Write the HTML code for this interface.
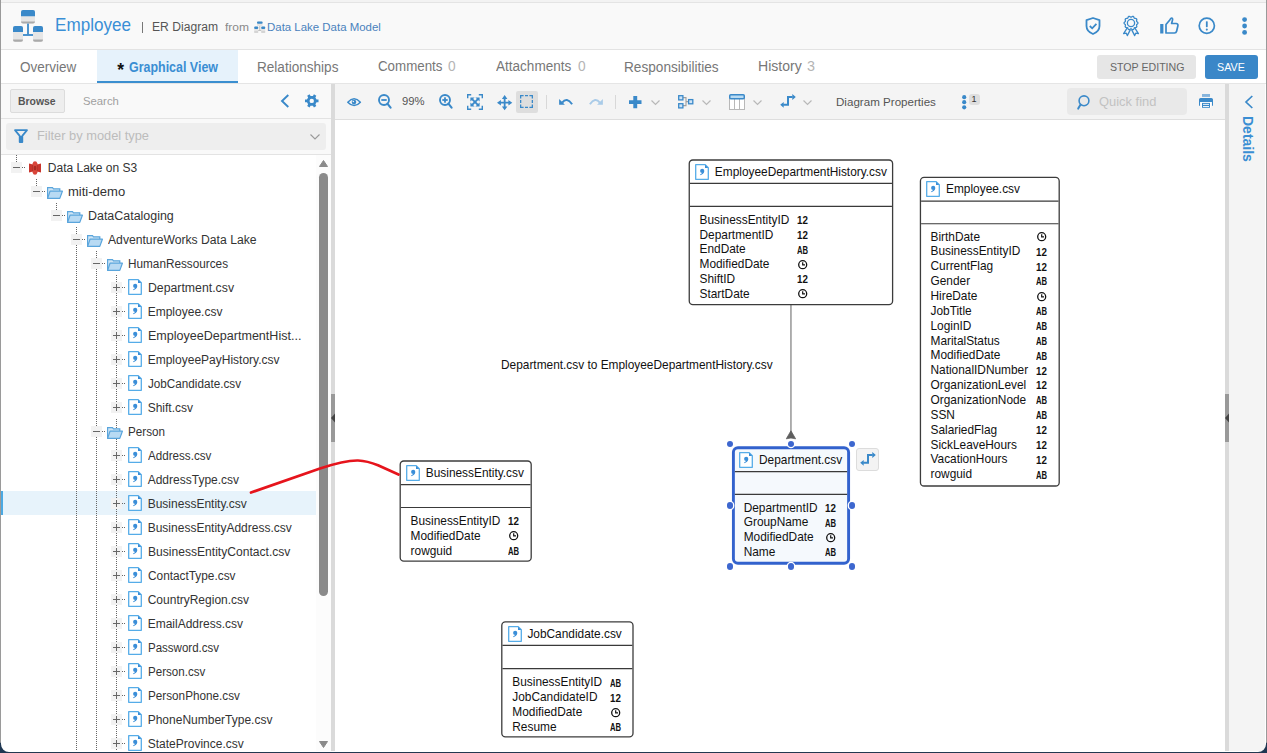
<!DOCTYPE html><html><head><meta charset="utf-8"><style>
html,body{margin:0;padding:0;}
body{width:1267px;height:753px;position:relative;overflow:hidden;background:#fff;font-family:"Liberation Sans", sans-serif;}
.t{position:absolute;white-space:nowrap;font-family:"Liberation Sans", sans-serif;}
svg{overflow:visible}
</style></head><body>
<div style="position:absolute;left:0px;top:0px;width:1267px;height:2px;background:#f3f3f3"></div>
<div style="position:absolute;left:0px;top:2px;width:1267px;height:1px;background:#e4e4e4"></div>
<div style="position:absolute;left:0px;top:3px;width:1267px;height:46px;background:#f9f9f9"></div>
<div style="position:absolute;left:0px;top:49px;width:1267px;height:1px;background:#e3e3e3"></div>
<svg style="position:absolute;left:13px;top:10px" width="30" height="32" viewBox="0 0 30 32"><rect x="8" y="0" width="14" height="13.6" rx="2" fill="#e6e6e6"/><path d="M8 11.5 h14 v0.1 a2 2 0 0 1 -2 2 h-10 a2 2 0 0 1 -2 -2z" fill="#aaa"/><path d="M8 6.2 V2 a2 2 0 0 1 2 -2 h10 a2 2 0 0 1 2 2 V6.2z" fill="#3a89c9"/><rect x="0" y="16" width="10" height="15.7" rx="2" fill="#e6e6e6"/><path d="M0 29.5 h10 a2 2 0 0 1 -2 2.2 h-6 a2 2 0 0 1 -2 -2.2z" fill="#aaa"/><path d="M0 22.1 V18 a2 2 0 0 1 2 -2 h6 a2 2 0 0 1 2 2 V22.1z" fill="#3a89c9"/><rect x="20" y="16" width="10" height="15.7" rx="2" fill="#e6e6e6"/><path d="M20 29.5 h10 a2 2 0 0 1 -2 2.2 h-6 a2 2 0 0 1 -2 -2.2z" fill="#aaa"/><path d="M20 22.1 V18 a2 2 0 0 1 2 -2 h6 a2 2 0 0 1 2 2 V22.1z" fill="#3a89c9"/><rect x="14.1" y="13.6" width="1.8" height="11" fill="#3a89c9"/><rect x="10" y="24.1" width="10" height="1.8" fill="#3a89c9"/></svg>
<div id="employee" style="position:absolute;white-space:nowrap;font-family:'Liberation Sans';left:54.69px;top:15.72px;font-size:18.605px;line-height:18.605px;color:#3a8fd6;font-weight:400;transform-origin:0 0;transform:scaleX(0.9194)">Employee</div>
<div style="position:absolute;left:142px;top:22px;width:1px;height:11px;background:#777"></div>
<div id="erdiag" style="position:absolute;white-space:nowrap;font-family:'Liberation Sans';left:152.24px;top:19.57px;font-size:13.227px;line-height:13.227px;color:#555;font-weight:400;transform-origin:0 0;transform:scaleX(0.9168)">ER Diagram</div>
<div id="from" style="position:absolute;white-space:nowrap;font-family:'Liberation Sans';left:225.04px;top:21.97px;font-size:11.500px;line-height:11.500px;color:#8a8a8a;font-weight:400;transform-origin:0 0;transform:scaleX(1.0442)">from</div>
<svg style="position:absolute;left:254px;top:20.5px" width="12" height="12" viewBox="0 0 12 12"><rect x="3" y="0.4" width="5.6" height="4.6" rx="1" fill="#e4e4e4"/><rect x="3" y="0.4" width="5.6" height="2.3" rx="1" fill="#3a89c9"/><rect x="0.2" y="5.5" width="4" height="6" rx="1" fill="#e4e4e4"/><rect x="0.2" y="5.5" width="4" height="2.6" rx="1" fill="#3a89c9"/><rect x="7.2" y="5.5" width="4" height="6" rx="1" fill="#e4e4e4"/><rect x="7.2" y="5.5" width="4" height="2.6" rx="1" fill="#3a89c9"/><rect x="5.3" y="5" width="1" height="4" fill="#bbb"/><rect x="4.2" y="9" width="3" height="0.9" fill="#bbb"/><rect x="0.2" y="10.6" width="4" height="0.9" fill="#bbb"/><rect x="7.2" y="10.6" width="4" height="0.9" fill="#bbb"/></svg>
<div id="dldm" style="position:absolute;white-space:nowrap;font-family:'Liberation Sans';left:266.82px;top:21.77px;font-size:10.901px;line-height:10.901px;color:#4a82bd;font-weight:400;transform-origin:0 0;transform:scaleX(1.0506)">Data Lake Data Model</div>
<svg style="position:absolute;left:1085px;top:17px" width="16" height="18" viewBox="0 0 16 18"><path d="M8 1 L14.5 3.2 V9 C14.5 13 11.5 15.6 8 17 C4.5 15.6 1.5 13 1.5 9 V3.2 Z" fill="none" stroke="#3a89c9" stroke-width="1.8" stroke-linejoin="round"/><path d="M4.8 9 L7.2 11.3 L11.4 6.8" fill="none" stroke="#3a89c9" stroke-width="1.8"/></svg>
<svg style="position:absolute;left:1122px;top:15px" width="18" height="21" viewBox="0 0 18 21"><path d="M5.4 12.6 L1.6 18.6 L4.3 18.2 L5.3 20.6 L8.4 14.6" fill="none" stroke="#3a89c9" stroke-width="1.3" stroke-linejoin="round"/><path d="M12.6 12.6 L16.4 18.6 L13.7 18.2 L12.7 20.6 L9.6 14.6" fill="none" stroke="#3a89c9" stroke-width="1.3" stroke-linejoin="round"/><path d="M15.95 8.00 L15.87 8.36 L15.64 8.70 L15.32 9.00 L14.99 9.27 L14.72 9.53 L14.56 9.81 L14.53 10.12 L14.60 10.49 L14.70 10.91 L14.78 11.34 L14.77 11.75 L14.62 12.09 L14.34 12.33 L13.96 12.47 L13.53 12.53 L13.10 12.55 L12.73 12.60 L12.44 12.73 L12.23 12.97 L12.06 13.30 L11.91 13.70 L11.71 14.10 L11.46 14.42 L11.15 14.61 L10.78 14.64 L10.39 14.53 L10.00 14.32 L9.64 14.09 L9.31 13.92 L9.00 13.85 L8.69 13.92 L8.36 14.09 L8.00 14.32 L7.61 14.53 L7.22 14.64 L6.85 14.61 L6.54 14.42 L6.29 14.10 L6.09 13.70 L5.94 13.30 L5.77 12.97 L5.56 12.73 L5.27 12.60 L4.90 12.55 L4.47 12.53 L4.04 12.47 L3.66 12.33 L3.38 12.09 L3.23 11.75 L3.22 11.34 L3.30 10.91 L3.40 10.49 L3.47 10.12 L3.44 9.81 L3.28 9.53 L3.01 9.27 L2.68 9.00 L2.36 8.70 L2.13 8.36 L2.05 8.00 L2.13 7.64 L2.36 7.30 L2.68 7.00 L3.01 6.73 L3.28 6.47 L3.44 6.19 L3.47 5.88 L3.40 5.51 L3.30 5.09 L3.22 4.66 L3.23 4.25 L3.38 3.91 L3.66 3.67 L4.04 3.53 L4.47 3.47 L4.90 3.45 L5.27 3.40 L5.56 3.27 L5.77 3.03 L5.94 2.70 L6.09 2.30 L6.29 1.90 L6.54 1.58 L6.85 1.39 L7.22 1.36 L7.61 1.47 L8.00 1.68 L8.36 1.91 L8.69 2.08 L9.00 2.15 L9.31 2.08 L9.64 1.91 L10.00 1.68 L10.39 1.47 L10.78 1.36 L11.15 1.39 L11.46 1.58 L11.71 1.90 L11.91 2.30 L12.06 2.70 L12.23 3.03 L12.44 3.27 L12.73 3.40 L13.10 3.45 L13.53 3.47 L13.96 3.53 L14.34 3.67 L14.62 3.91 L14.77 4.25 L14.78 4.66 L14.70 5.09 L14.60 5.51 L14.53 5.88 L14.56 6.19 L14.72 6.47 L14.99 6.73 L15.32 7.00 L15.64 7.30 L15.87 7.64 L15.95 8.00Z" fill="#f9f9f9" stroke="#3a89c9" stroke-width="1.3" stroke-linejoin="round"/><circle cx="9" cy="8" r="3.6" fill="none" stroke="#3a89c9" stroke-width="1.3"/></svg>
<svg style="position:absolute;left:1160px;top:17px" width="19" height="17" viewBox="0 0 19 17"><rect x="0.2" y="7" width="3.2" height="9.5" fill="#3a89c9"/><path d="M6 7.5 L9.8 3 C10.5 1.8 10.8 1 11.5 1 C12.6 1 12.8 2.2 12.4 3.5 L11.6 6.5 H16.2 C17.5 6.5 18.2 7.6 17.9 8.8 L16.6 14.3 C16.3 15.5 15.5 16 14.5 16 H6 Z" fill="none" stroke="#3a89c9" stroke-width="1.7" stroke-linejoin="round"/></svg>
<svg style="position:absolute;left:1198px;top:17px" width="18" height="18" viewBox="0 0 18 18"><circle cx="8.8" cy="8.8" r="7.6" fill="none" stroke="#3a89c9" stroke-width="1.7"/><rect x="7.9" y="4.2" width="1.8" height="6" rx="0.6" fill="#3a89c9"/><circle cx="8.8" cy="12.6" r="1.05" fill="#3a89c9"/></svg>
<svg style="position:absolute;left:1242px;top:17px" width="6" height="18" viewBox="0 0 6 18"><circle cx="2.6" cy="2.6" r="2.4" fill="#3a89c9"/><circle cx="2.6" cy="9" r="2.4" fill="#3a89c9"/><circle cx="2.6" cy="15.4" r="2.4" fill="#3a89c9"/></svg>
<div style="position:absolute;left:0px;top:50px;width:1267px;height:33px;background:#fff"></div>
<div style="position:absolute;left:97px;top:50px;width:141px;height:31px;background:#e6f2fb"></div>
<div style="position:absolute;left:97px;top:81px;width:141px;height:2px;background:#3b8fd0"></div>
<div style="position:absolute;left:0px;top:83px;width:1267px;height:1px;background:#e5e5e5"></div>
<div id="overview" style="position:absolute;white-space:nowrap;font-family:'Liberation Sans';left:20.15px;top:59.82px;font-size:14.390px;line-height:14.390px;color:#777;font-weight:400;transform-origin:0 0;transform:scaleX(0.9393)">Overview</div>
<div class="t" style="left:117.3px;top:61.69px;font-size:17.5px;line-height:17.5px;color:#111;font-weight:700;">*</div>
<div id="gview" style="position:absolute;white-space:nowrap;font-family:'Liberation Sans';left:129.27px;top:60.97px;font-size:13.953px;line-height:13.953px;color:#3a8ed3;font-weight:700;transform-origin:0 0;transform:scaleX(0.8930)">Graphical View</div>
<div id="rel" style="position:absolute;white-space:nowrap;font-family:'Liberation Sans';left:256.59px;top:59.82px;font-size:14.390px;line-height:14.390px;color:#777;font-weight:400;transform-origin:0 0;transform:scaleX(0.9438)">Relationships</div>
<div id="comments" style="position:absolute;white-space:nowrap;font-family:'Liberation Sans';left:378.48px;top:59.40px;font-size:14.244px;line-height:14.244px;color:#777;font-weight:400;transform-origin:0 0;transform:scaleX(0.9362)">Comments</div>
<div id="c0" style="position:absolute;white-space:nowrap;font-family:'Liberation Sans';left:447.68px;top:59.40px;font-size:14.244px;line-height:14.244px;color:#b5b5b5;font-weight:400;transform-origin:0 0;transform:scaleX(0.9632)">0</div>
<div id="attach" style="position:absolute;white-space:nowrap;font-family:'Liberation Sans';left:496.26px;top:59.40px;font-size:14.244px;line-height:14.244px;color:#777;font-weight:400;transform-origin:0 0;transform:scaleX(0.9511)">Attachments</div>
<div id="a0" style="position:absolute;white-space:nowrap;font-family:'Liberation Sans';left:577.68px;top:59.40px;font-size:14.244px;line-height:14.244px;color:#b5b5b5;font-weight:400;transform-origin:0 0;transform:scaleX(0.9632)">0</div>
<div id="resp" style="position:absolute;white-space:nowrap;font-family:'Liberation Sans';left:623.58px;top:59.82px;font-size:14.390px;line-height:14.390px;color:#777;font-weight:400;transform-origin:0 0;transform:scaleX(0.9478)">Responsibilities</div>
<div id="history" style="position:absolute;white-space:nowrap;font-family:'Liberation Sans';left:757.93px;top:59.40px;font-size:14.244px;line-height:14.244px;color:#777;font-weight:400;transform-origin:0 0;transform:scaleX(0.9865)">History</div>
<div id="h3" style="position:absolute;white-space:nowrap;font-family:'Liberation Sans';left:807.13px;top:59.40px;font-size:14.244px;line-height:14.244px;color:#b5b5b5;font-weight:400;transform-origin:0 0;transform:scaleX(1.0075)">3</div>
<div style="position:absolute;left:1097px;top:55px;width:99px;height:24px;background:#e6e6e6;border-radius:3px"></div>
<div id="stop" style="position:absolute;white-space:nowrap;font-family:'Liberation Sans';left:1110.05px;top:61.16px;font-size:11.628px;line-height:11.628px;color:#666;font-weight:400;transform-origin:0 0;transform:scaleX(0.9139)">STOP EDITING</div>
<div style="position:absolute;left:1205px;top:55px;width:53px;height:24px;background:#3a87c8;border-radius:3px"></div>
<div id="save" style="position:absolute;white-space:nowrap;font-family:'Liberation Sans';left:1216.83px;top:61.16px;font-size:11.628px;line-height:11.628px;color:#fff;font-weight:400;transform-origin:0 0;transform:scaleX(0.9238)">SAVE</div>
<div style="position:absolute;left:1px;top:84px;width:330px;height:34px;background:#f9f9f9"></div>
<div style="position:absolute;left:1px;top:118px;width:330px;height:1px;background:#e3e3e3"></div>
<div style="position:absolute;left:1px;top:119px;width:330px;height:35px;background:#f9f9f9"></div>
<div style="position:absolute;left:1px;top:154px;width:330px;height:1px;background:#e3e3e3"></div>
<div style="position:absolute;left:10px;top:89px;width:54px;height:23px;background:#eeeeee;border:1px solid #dcdcdc;border-radius:2px;box-sizing:border-box;width:55px;height:24px"></div>
<div id="browse" style="position:absolute;white-space:nowrap;font-family:'Liberation Sans';left:18.49px;top:95.51px;font-size:11.119px;line-height:11.119px;color:#555;font-weight:700;transform-origin:0 0;transform:scaleX(0.9376)">Browse</div>
<div id="search" style="position:absolute;white-space:nowrap;font-family:'Liberation Sans';left:82.81px;top:95.51px;font-size:11.119px;line-height:11.119px;color:#a0a0a0;font-weight:400;transform-origin:0 0;transform:scaleX(1.0176)">Search</div>
<svg style="position:absolute;left:280px;top:94px" width="10" height="14" viewBox="0 0 10 14"><path d="M8.3 1 L2 7 L8.3 13" fill="none" stroke="#3a89c9" stroke-width="1.9"/></svg>
<svg style="position:absolute;left:305px;top:94px" width="14" height="14" viewBox="0 0 14 14"><path d="M11.54 5.48 L13.51 5.54 L13.51 8.26 L11.54 8.32 L10.38 10.34 L11.31 12.08 L8.95 13.44 L7.92 11.76 L5.58 11.76 L4.55 13.44 L2.19 12.08 L3.12 10.34 L1.96 8.32 L-0.01 8.26 L-0.01 5.54 L1.96 5.48 L3.12 3.46 L2.19 1.72 L4.55 0.36 L5.58 2.04 L7.92 2.04 L8.95 0.36 L11.31 1.72 L10.38 3.46Z M8.95 6.9 A2.2 2.2 0 1 0 4.55 6.9 A2.2 2.2 0 1 0 8.95 6.9Z" fill="#3a89c9" fill-rule="evenodd"/></svg>
<div style="position:absolute;left:6px;top:123px;width:320px;height:27px;background:#eeeeee;border-radius:3px"></div>
<svg style="position:absolute;left:14px;top:129px" width="14" height="14" viewBox="0 0 14 14"><path d="M1 1.2 H13 L8.3 6.8 V13 H5.7 V6.8 Z" fill="none" stroke="#3a89c9" stroke-width="1.8" stroke-linejoin="round"/><rect x="5.7" y="7" width="2.6" height="6" fill="#3a89c9"/></svg>
<div id="filter" style="position:absolute;white-space:nowrap;font-family:'Liberation Sans';left:37.33px;top:130.44px;font-size:12.936px;line-height:12.936px;color:#bcbcbc;font-weight:400;transform-origin:0 0;transform:scaleX(0.9932)">Filter by model type</div>
<svg style="position:absolute;left:310px;top:134px" width="10" height="6" viewBox="0 0 10 6"><path d="M0.5 0.5 L5 5 L9.5 0.5" fill="none" stroke="#999" stroke-width="1.1"/></svg>
<div style="position:absolute;left:1px;top:155px;width:315px;height:597px;background:#fff"></div>
<div style="position:absolute;left:1px;top:491px;width:315px;height:24px;background:#e7f3fb"></div>
<div style="position:absolute;left:1px;top:491px;width:2px;height:24px;background:#4ba9e3"></div>
<div style="position:absolute;left:16px;top:155px;width:1px;height:7px;background:repeating-linear-gradient(to bottom,#666 0 1px,transparent 1px 2px)"></div>
<div style="position:absolute;left:36px;top:179px;width:1px;height:7px;background:repeating-linear-gradient(to bottom,#666 0 1px,transparent 1px 2px)"></div>
<div style="position:absolute;left:56px;top:203px;width:1px;height:7px;background:repeating-linear-gradient(to bottom,#666 0 1px,transparent 1px 2px)"></div>
<div style="position:absolute;left:76px;top:227px;width:1px;height:525px;background:repeating-linear-gradient(to bottom,#666 0 1px,transparent 1px 2px)"></div>
<div style="position:absolute;left:96px;top:251px;width:1px;height:501px;background:repeating-linear-gradient(to bottom,#666 0 1px,transparent 1px 2px)"></div>
<div style="position:absolute;left:116px;top:275px;width:1px;height:128px;background:repeating-linear-gradient(to bottom,#666 0 1px,transparent 1px 2px)"></div>
<div style="position:absolute;left:116px;top:419px;width:1px;height:333px;background:repeating-linear-gradient(to bottom,#666 0 1px,transparent 1px 2px)"></div>
<div style="position:absolute;left:11px;top:162.0px;width:11px;height:11px;background:#f2f2f2"></div>
<div style="position:absolute;left:13px;top:166.9px;width:7px;height:1.2px;background:#666"></div>
<div style="position:absolute;left:22px;top:167px;width:4px;height:1px;background:repeating-linear-gradient(to right,#666 0 1px,transparent 1px 2px)"></div>
<svg style="position:absolute;left:29px;top:160.5px" width="12" height="14" viewBox="0 0 12 14"><path d="M0 2.4 L4 3.6 V10.4 L0 11.6Z" fill="#c9352c"/><path d="M12 2.4 L8 3.6 V10.4 L12 11.6Z" fill="#c9352c"/><rect x="3.6" y="2" width="4.8" height="10" fill="#e04a3e"/><ellipse cx="6" cy="1.9" rx="2.1" ry="1.7" fill="#d8443a"/><ellipse cx="6" cy="12.1" rx="2.1" ry="1.7" fill="#d8443a"/><ellipse cx="6" cy="7" rx="1.3" ry="2.6" fill="#a82a22"/><path d="M3.8 3.6 V10.4 M8.2 3.6 V10.4" stroke="#9b2a22" stroke-width="0.7"/></svg>
<div class="t" style="left:47.8px;top:161.84px;font-size:12px;line-height:12px;color:#333;font-weight:400;">Data Lake on S3</div>
<div style="position:absolute;left:31px;top:186.0px;width:11px;height:11px;background:#f2f2f2"></div>
<div style="position:absolute;left:33px;top:190.9px;width:7px;height:1.2px;background:#666"></div>
<div style="position:absolute;left:42px;top:191px;width:4px;height:1px;background:repeating-linear-gradient(to right,#666 0 1px,transparent 1px 2px)"></div>
<svg style="position:absolute;left:47px;top:187.0px" width="16" height="12" viewBox="0 0 16 12"><path d="M0.6 11.4 V0.6 H5.5 L6.5 1.8 H12.8 V4.2" fill="#cfe5f5" stroke="#5aa5dc" stroke-width="1.2"/><path d="M0.6 11.4 L3 4.2 H15.4 L12.8 11.4 Z" fill="#b8daf3" stroke="#5aa5dc" stroke-width="1.2" stroke-linejoin="round"/></svg>
<div class="t" style="left:67.5px;top:185.84px;font-size:12px;line-height:12px;color:#333;font-weight:400;transform-origin:0 0;transform:scaleX(1.0857)">miti-demo</div>
<div style="position:absolute;left:51px;top:210.0px;width:11px;height:11px;background:#f2f2f2"></div>
<div style="position:absolute;left:53px;top:214.9px;width:7px;height:1.2px;background:#666"></div>
<div style="position:absolute;left:62px;top:215px;width:4px;height:1px;background:repeating-linear-gradient(to right,#666 0 1px,transparent 1px 2px)"></div>
<svg style="position:absolute;left:67px;top:211.0px" width="16" height="12" viewBox="0 0 16 12"><path d="M0.6 11.4 V0.6 H5.5 L6.5 1.8 H12.8 V4.2" fill="#cfe5f5" stroke="#5aa5dc" stroke-width="1.2"/><path d="M0.6 11.4 L3 4.2 H15.4 L12.8 11.4 Z" fill="#b8daf3" stroke="#5aa5dc" stroke-width="1.2" stroke-linejoin="round"/></svg>
<div class="t" style="left:87.5px;top:209.84px;font-size:12px;line-height:12px;color:#333;font-weight:400;transform-origin:0 0;transform:scaleX(1.0368)">DataCataloging</div>
<div style="position:absolute;left:71px;top:234.0px;width:11px;height:11px;background:#f2f2f2"></div>
<div style="position:absolute;left:73px;top:238.9px;width:7px;height:1.2px;background:#666"></div>
<div style="position:absolute;left:82px;top:239px;width:4px;height:1px;background:repeating-linear-gradient(to right,#666 0 1px,transparent 1px 2px)"></div>
<svg style="position:absolute;left:87px;top:235.0px" width="16" height="12" viewBox="0 0 16 12"><path d="M0.6 11.4 V0.6 H5.5 L6.5 1.8 H12.8 V4.2" fill="#cfe5f5" stroke="#5aa5dc" stroke-width="1.2"/><path d="M0.6 11.4 L3 4.2 H15.4 L12.8 11.4 Z" fill="#b8daf3" stroke="#5aa5dc" stroke-width="1.2" stroke-linejoin="round"/></svg>
<div class="t" style="left:107.5px;top:233.84px;font-size:12px;line-height:12px;color:#333;font-weight:400;transform-origin:0 0;transform:scaleX(1.0137)">AdventureWorks Data Lake</div>
<div style="position:absolute;left:91px;top:258.0px;width:11px;height:11px;background:#f2f2f2"></div>
<div style="position:absolute;left:93px;top:262.9px;width:7px;height:1.2px;background:#666"></div>
<div style="position:absolute;left:102px;top:263px;width:4px;height:1px;background:repeating-linear-gradient(to right,#666 0 1px,transparent 1px 2px)"></div>
<svg style="position:absolute;left:107px;top:259.0px" width="16" height="12" viewBox="0 0 16 12"><path d="M0.6 11.4 V0.6 H5.5 L6.5 1.8 H12.8 V4.2" fill="#cfe5f5" stroke="#5aa5dc" stroke-width="1.2"/><path d="M0.6 11.4 L3 4.2 H15.4 L12.8 11.4 Z" fill="#b8daf3" stroke="#5aa5dc" stroke-width="1.2" stroke-linejoin="round"/></svg>
<div class="t" style="left:127.5px;top:257.84px;font-size:12px;line-height:12px;color:#333;font-weight:400;transform-origin:0 0;transform:scaleX(0.9803)">HumanRessources</div>
<div style="position:absolute;left:111px;top:282.0px;width:11px;height:11px;background:#f2f2f2"></div>
<div style="position:absolute;left:113px;top:286.9px;width:7px;height:1.2px;background:#666"></div>
<div style="position:absolute;left:115.9px;top:284.0px;width:1.2px;height:7px;background:#666"></div>
<div style="position:absolute;left:122px;top:287px;width:4px;height:1px;background:repeating-linear-gradient(to right,#666 0 1px,transparent 1px 2px)"></div>
<svg style="position:absolute;left:128px;top:279.0px" width="14" height="16" viewBox="0 0 14 16"><path d="M0.7 0.7 H10.2 L13.3 3.8 V15.3 H0.7 Z" fill="#fff" stroke="#55ace8" stroke-width="1.3" stroke-linejoin="round"/><path d="M10 0.8 L13.2 4 H10 Z" fill="#3a8ed8"/><circle cx="7.2" cy="6.9" r="2.1" fill="#3a8ed8"/><path d="M9.2 7.3 C9.1 9.2 7.6 10.6 5.3 11.2 L5.1 10.5 C6.3 10 7.1 9.3 7.3 8.6 Z" fill="#3a8ed8"/></svg>
<div class="t" style="left:147.7px;top:281.84px;font-size:12px;line-height:12px;color:#333;font-weight:400;transform-origin:0 0;transform:scaleX(1.0237)">Department.csv</div>
<div style="position:absolute;left:111px;top:306.0px;width:11px;height:11px;background:#f2f2f2"></div>
<div style="position:absolute;left:113px;top:310.9px;width:7px;height:1.2px;background:#666"></div>
<div style="position:absolute;left:115.9px;top:308.0px;width:1.2px;height:7px;background:#666"></div>
<div style="position:absolute;left:122px;top:311px;width:4px;height:1px;background:repeating-linear-gradient(to right,#666 0 1px,transparent 1px 2px)"></div>
<svg style="position:absolute;left:128px;top:303.0px" width="14" height="16" viewBox="0 0 14 16"><path d="M0.7 0.7 H10.2 L13.3 3.8 V15.3 H0.7 Z" fill="#fff" stroke="#55ace8" stroke-width="1.3" stroke-linejoin="round"/><path d="M10 0.8 L13.2 4 H10 Z" fill="#3a8ed8"/><circle cx="7.2" cy="6.9" r="2.1" fill="#3a8ed8"/><path d="M9.2 7.3 C9.1 9.2 7.6 10.6 5.3 11.2 L5.1 10.5 C6.3 10 7.1 9.3 7.3 8.6 Z" fill="#3a8ed8"/></svg>
<div class="t" style="left:147.7px;top:305.84px;font-size:12px;line-height:12px;color:#333;font-weight:400;">Employee.csv</div>
<div style="position:absolute;left:111px;top:330.0px;width:11px;height:11px;background:#f2f2f2"></div>
<div style="position:absolute;left:113px;top:334.9px;width:7px;height:1.2px;background:#666"></div>
<div style="position:absolute;left:115.9px;top:332.0px;width:1.2px;height:7px;background:#666"></div>
<div style="position:absolute;left:122px;top:335px;width:4px;height:1px;background:repeating-linear-gradient(to right,#666 0 1px,transparent 1px 2px)"></div>
<svg style="position:absolute;left:128px;top:327.0px" width="14" height="16" viewBox="0 0 14 16"><path d="M0.7 0.7 H10.2 L13.3 3.8 V15.3 H0.7 Z" fill="#fff" stroke="#55ace8" stroke-width="1.3" stroke-linejoin="round"/><path d="M10 0.8 L13.2 4 H10 Z" fill="#3a8ed8"/><circle cx="7.2" cy="6.9" r="2.1" fill="#3a8ed8"/><path d="M9.2 7.3 C9.1 9.2 7.6 10.6 5.3 11.2 L5.1 10.5 C6.3 10 7.1 9.3 7.3 8.6 Z" fill="#3a8ed8"/></svg>
<div class="t" style="left:147.7px;top:329.84px;font-size:12px;line-height:12px;color:#333;font-weight:400;transform-origin:0 0;transform:scaleX(1.0454)">EmployeeDepartmentHist...</div>
<div style="position:absolute;left:111px;top:354.0px;width:11px;height:11px;background:#f2f2f2"></div>
<div style="position:absolute;left:113px;top:358.9px;width:7px;height:1.2px;background:#666"></div>
<div style="position:absolute;left:115.9px;top:356.0px;width:1.2px;height:7px;background:#666"></div>
<div style="position:absolute;left:122px;top:359px;width:4px;height:1px;background:repeating-linear-gradient(to right,#666 0 1px,transparent 1px 2px)"></div>
<svg style="position:absolute;left:128px;top:351.0px" width="14" height="16" viewBox="0 0 14 16"><path d="M0.7 0.7 H10.2 L13.3 3.8 V15.3 H0.7 Z" fill="#fff" stroke="#55ace8" stroke-width="1.3" stroke-linejoin="round"/><path d="M10 0.8 L13.2 4 H10 Z" fill="#3a8ed8"/><circle cx="7.2" cy="6.9" r="2.1" fill="#3a8ed8"/><path d="M9.2 7.3 C9.1 9.2 7.6 10.6 5.3 11.2 L5.1 10.5 C6.3 10 7.1 9.3 7.3 8.6 Z" fill="#3a8ed8"/></svg>
<div class="t" style="left:147.7px;top:353.84px;font-size:12px;line-height:12px;color:#333;font-weight:400;">EmployeePayHistory.csv</div>
<div style="position:absolute;left:111px;top:378.0px;width:11px;height:11px;background:#f2f2f2"></div>
<div style="position:absolute;left:113px;top:382.9px;width:7px;height:1.2px;background:#666"></div>
<div style="position:absolute;left:115.9px;top:380.0px;width:1.2px;height:7px;background:#666"></div>
<div style="position:absolute;left:122px;top:383px;width:4px;height:1px;background:repeating-linear-gradient(to right,#666 0 1px,transparent 1px 2px)"></div>
<svg style="position:absolute;left:128px;top:375.0px" width="14" height="16" viewBox="0 0 14 16"><path d="M0.7 0.7 H10.2 L13.3 3.8 V15.3 H0.7 Z" fill="#fff" stroke="#55ace8" stroke-width="1.3" stroke-linejoin="round"/><path d="M10 0.8 L13.2 4 H10 Z" fill="#3a8ed8"/><circle cx="7.2" cy="6.9" r="2.1" fill="#3a8ed8"/><path d="M9.2 7.3 C9.1 9.2 7.6 10.6 5.3 11.2 L5.1 10.5 C6.3 10 7.1 9.3 7.3 8.6 Z" fill="#3a8ed8"/></svg>
<div class="t" style="left:147.7px;top:377.84px;font-size:12px;line-height:12px;color:#333;font-weight:400;transform-origin:0 0;transform:scaleX(0.9748)">JobCandidate.csv</div>
<div style="position:absolute;left:111px;top:402.0px;width:11px;height:11px;background:#f2f2f2"></div>
<div style="position:absolute;left:113px;top:406.9px;width:7px;height:1.2px;background:#666"></div>
<div style="position:absolute;left:115.9px;top:404.0px;width:1.2px;height:7px;background:#666"></div>
<div style="position:absolute;left:122px;top:407px;width:4px;height:1px;background:repeating-linear-gradient(to right,#666 0 1px,transparent 1px 2px)"></div>
<svg style="position:absolute;left:128px;top:399.0px" width="14" height="16" viewBox="0 0 14 16"><path d="M0.7 0.7 H10.2 L13.3 3.8 V15.3 H0.7 Z" fill="#fff" stroke="#55ace8" stroke-width="1.3" stroke-linejoin="round"/><path d="M10 0.8 L13.2 4 H10 Z" fill="#3a8ed8"/><circle cx="7.2" cy="6.9" r="2.1" fill="#3a8ed8"/><path d="M9.2 7.3 C9.1 9.2 7.6 10.6 5.3 11.2 L5.1 10.5 C6.3 10 7.1 9.3 7.3 8.6 Z" fill="#3a8ed8"/></svg>
<div class="t" style="left:147.7px;top:401.84px;font-size:12px;line-height:12px;color:#333;font-weight:400;">Shift.csv</div>
<div style="position:absolute;left:91px;top:426.0px;width:11px;height:11px;background:#f2f2f2"></div>
<div style="position:absolute;left:93px;top:430.9px;width:7px;height:1.2px;background:#666"></div>
<div style="position:absolute;left:102px;top:431px;width:4px;height:1px;background:repeating-linear-gradient(to right,#666 0 1px,transparent 1px 2px)"></div>
<svg style="position:absolute;left:107px;top:427.0px" width="16" height="12" viewBox="0 0 16 12"><path d="M0.6 11.4 V0.6 H5.5 L6.5 1.8 H12.8 V4.2" fill="#cfe5f5" stroke="#5aa5dc" stroke-width="1.2"/><path d="M0.6 11.4 L3 4.2 H15.4 L12.8 11.4 Z" fill="#b8daf3" stroke="#5aa5dc" stroke-width="1.2" stroke-linejoin="round"/></svg>
<div class="t" style="left:127.5px;top:425.84px;font-size:12px;line-height:12px;color:#333;font-weight:400;transform-origin:0 0;transform:scaleX(0.9733)">Person</div>
<div style="position:absolute;left:111px;top:450.0px;width:11px;height:11px;background:#f2f2f2"></div>
<div style="position:absolute;left:113px;top:454.9px;width:7px;height:1.2px;background:#666"></div>
<div style="position:absolute;left:115.9px;top:452.0px;width:1.2px;height:7px;background:#666"></div>
<div style="position:absolute;left:122px;top:455px;width:4px;height:1px;background:repeating-linear-gradient(to right,#666 0 1px,transparent 1px 2px)"></div>
<svg style="position:absolute;left:128px;top:447.0px" width="14" height="16" viewBox="0 0 14 16"><path d="M0.7 0.7 H10.2 L13.3 3.8 V15.3 H0.7 Z" fill="#fff" stroke="#55ace8" stroke-width="1.3" stroke-linejoin="round"/><path d="M10 0.8 L13.2 4 H10 Z" fill="#3a8ed8"/><circle cx="7.2" cy="6.9" r="2.1" fill="#3a8ed8"/><path d="M9.2 7.3 C9.1 9.2 7.6 10.6 5.3 11.2 L5.1 10.5 C6.3 10 7.1 9.3 7.3 8.6 Z" fill="#3a8ed8"/></svg>
<div class="t" style="left:147.7px;top:449.84px;font-size:12px;line-height:12px;color:#333;font-weight:400;transform-origin:0 0;transform:scaleX(0.9694)">Address.csv</div>
<div style="position:absolute;left:111px;top:474.0px;width:11px;height:11px;background:#f2f2f2"></div>
<div style="position:absolute;left:113px;top:478.9px;width:7px;height:1.2px;background:#666"></div>
<div style="position:absolute;left:115.9px;top:476.0px;width:1.2px;height:7px;background:#666"></div>
<div style="position:absolute;left:122px;top:479px;width:4px;height:1px;background:repeating-linear-gradient(to right,#666 0 1px,transparent 1px 2px)"></div>
<svg style="position:absolute;left:128px;top:471.0px" width="14" height="16" viewBox="0 0 14 16"><path d="M0.7 0.7 H10.2 L13.3 3.8 V15.3 H0.7 Z" fill="#fff" stroke="#55ace8" stroke-width="1.3" stroke-linejoin="round"/><path d="M10 0.8 L13.2 4 H10 Z" fill="#3a8ed8"/><circle cx="7.2" cy="6.9" r="2.1" fill="#3a8ed8"/><path d="M9.2 7.3 C9.1 9.2 7.6 10.6 5.3 11.2 L5.1 10.5 C6.3 10 7.1 9.3 7.3 8.6 Z" fill="#3a8ed8"/></svg>
<div class="t" style="left:147.7px;top:473.84px;font-size:12px;line-height:12px;color:#333;font-weight:400;">AddressType.csv</div>
<div style="position:absolute;left:111px;top:498.0px;width:11px;height:11px;background:#f2f2f2"></div>
<div style="position:absolute;left:113px;top:502.9px;width:7px;height:1.2px;background:#666"></div>
<div style="position:absolute;left:115.9px;top:500.0px;width:1.2px;height:7px;background:#666"></div>
<div style="position:absolute;left:122px;top:503px;width:4px;height:1px;background:repeating-linear-gradient(to right,#666 0 1px,transparent 1px 2px)"></div>
<svg style="position:absolute;left:128px;top:495.0px" width="14" height="16" viewBox="0 0 14 16"><path d="M0.7 0.7 H10.2 L13.3 3.8 V15.3 H0.7 Z" fill="#fff" stroke="#55ace8" stroke-width="1.3" stroke-linejoin="round"/><path d="M10 0.8 L13.2 4 H10 Z" fill="#3a8ed8"/><circle cx="7.2" cy="6.9" r="2.1" fill="#3a8ed8"/><path d="M9.2 7.3 C9.1 9.2 7.6 10.6 5.3 11.2 L5.1 10.5 C6.3 10 7.1 9.3 7.3 8.6 Z" fill="#3a8ed8"/></svg>
<div class="t" style="left:147.7px;top:497.84px;font-size:12px;line-height:12px;color:#333;font-weight:400;">BusinessEntity.csv</div>
<div style="position:absolute;left:111px;top:522.0px;width:11px;height:11px;background:#f2f2f2"></div>
<div style="position:absolute;left:113px;top:526.9px;width:7px;height:1.2px;background:#666"></div>
<div style="position:absolute;left:115.9px;top:524.0px;width:1.2px;height:7px;background:#666"></div>
<div style="position:absolute;left:122px;top:527px;width:4px;height:1px;background:repeating-linear-gradient(to right,#666 0 1px,transparent 1px 2px)"></div>
<svg style="position:absolute;left:128px;top:519.0px" width="14" height="16" viewBox="0 0 14 16"><path d="M0.7 0.7 H10.2 L13.3 3.8 V15.3 H0.7 Z" fill="#fff" stroke="#55ace8" stroke-width="1.3" stroke-linejoin="round"/><path d="M10 0.8 L13.2 4 H10 Z" fill="#3a8ed8"/><circle cx="7.2" cy="6.9" r="2.1" fill="#3a8ed8"/><path d="M9.2 7.3 C9.1 9.2 7.6 10.6 5.3 11.2 L5.1 10.5 C6.3 10 7.1 9.3 7.3 8.6 Z" fill="#3a8ed8"/></svg>
<div class="t" style="left:147.7px;top:521.84px;font-size:12px;line-height:12px;color:#333;font-weight:400;">BusinessEntityAddress.csv</div>
<div style="position:absolute;left:111px;top:546.0px;width:11px;height:11px;background:#f2f2f2"></div>
<div style="position:absolute;left:113px;top:550.9px;width:7px;height:1.2px;background:#666"></div>
<div style="position:absolute;left:115.9px;top:548.0px;width:1.2px;height:7px;background:#666"></div>
<div style="position:absolute;left:122px;top:551px;width:4px;height:1px;background:repeating-linear-gradient(to right,#666 0 1px,transparent 1px 2px)"></div>
<svg style="position:absolute;left:128px;top:543.0px" width="14" height="16" viewBox="0 0 14 16"><path d="M0.7 0.7 H10.2 L13.3 3.8 V15.3 H0.7 Z" fill="#fff" stroke="#55ace8" stroke-width="1.3" stroke-linejoin="round"/><path d="M10 0.8 L13.2 4 H10 Z" fill="#3a8ed8"/><circle cx="7.2" cy="6.9" r="2.1" fill="#3a8ed8"/><path d="M9.2 7.3 C9.1 9.2 7.6 10.6 5.3 11.2 L5.1 10.5 C6.3 10 7.1 9.3 7.3 8.6 Z" fill="#3a8ed8"/></svg>
<div class="t" style="left:147.7px;top:545.84px;font-size:12px;line-height:12px;color:#333;font-weight:400;transform-origin:0 0;transform:scaleX(1.0071)">BusinessEntityContact.csv</div>
<div style="position:absolute;left:111px;top:570.0px;width:11px;height:11px;background:#f2f2f2"></div>
<div style="position:absolute;left:113px;top:574.9px;width:7px;height:1.2px;background:#666"></div>
<div style="position:absolute;left:115.9px;top:572.0px;width:1.2px;height:7px;background:#666"></div>
<div style="position:absolute;left:122px;top:575px;width:4px;height:1px;background:repeating-linear-gradient(to right,#666 0 1px,transparent 1px 2px)"></div>
<svg style="position:absolute;left:128px;top:567.0px" width="14" height="16" viewBox="0 0 14 16"><path d="M0.7 0.7 H10.2 L13.3 3.8 V15.3 H0.7 Z" fill="#fff" stroke="#55ace8" stroke-width="1.3" stroke-linejoin="round"/><path d="M10 0.8 L13.2 4 H10 Z" fill="#3a8ed8"/><circle cx="7.2" cy="6.9" r="2.1" fill="#3a8ed8"/><path d="M9.2 7.3 C9.1 9.2 7.6 10.6 5.3 11.2 L5.1 10.5 C6.3 10 7.1 9.3 7.3 8.6 Z" fill="#3a8ed8"/></svg>
<div class="t" style="left:147.7px;top:569.84px;font-size:12px;line-height:12px;color:#333;font-weight:400;transform-origin:0 0;transform:scaleX(0.9864)">ContactType.csv</div>
<div style="position:absolute;left:111px;top:594.0px;width:11px;height:11px;background:#f2f2f2"></div>
<div style="position:absolute;left:113px;top:598.9px;width:7px;height:1.2px;background:#666"></div>
<div style="position:absolute;left:115.9px;top:596.0px;width:1.2px;height:7px;background:#666"></div>
<div style="position:absolute;left:122px;top:599px;width:4px;height:1px;background:repeating-linear-gradient(to right,#666 0 1px,transparent 1px 2px)"></div>
<svg style="position:absolute;left:128px;top:591.0px" width="14" height="16" viewBox="0 0 14 16"><path d="M0.7 0.7 H10.2 L13.3 3.8 V15.3 H0.7 Z" fill="#fff" stroke="#55ace8" stroke-width="1.3" stroke-linejoin="round"/><path d="M10 0.8 L13.2 4 H10 Z" fill="#3a8ed8"/><circle cx="7.2" cy="6.9" r="2.1" fill="#3a8ed8"/><path d="M9.2 7.3 C9.1 9.2 7.6 10.6 5.3 11.2 L5.1 10.5 C6.3 10 7.1 9.3 7.3 8.6 Z" fill="#3a8ed8"/></svg>
<div class="t" style="left:147.7px;top:593.84px;font-size:12px;line-height:12px;color:#333;font-weight:400;">CountryRegion.csv</div>
<div style="position:absolute;left:111px;top:618.0px;width:11px;height:11px;background:#f2f2f2"></div>
<div style="position:absolute;left:113px;top:622.9px;width:7px;height:1.2px;background:#666"></div>
<div style="position:absolute;left:115.9px;top:620.0px;width:1.2px;height:7px;background:#666"></div>
<div style="position:absolute;left:122px;top:623px;width:4px;height:1px;background:repeating-linear-gradient(to right,#666 0 1px,transparent 1px 2px)"></div>
<svg style="position:absolute;left:128px;top:615.0px" width="14" height="16" viewBox="0 0 14 16"><path d="M0.7 0.7 H10.2 L13.3 3.8 V15.3 H0.7 Z" fill="#fff" stroke="#55ace8" stroke-width="1.3" stroke-linejoin="round"/><path d="M10 0.8 L13.2 4 H10 Z" fill="#3a8ed8"/><circle cx="7.2" cy="6.9" r="2.1" fill="#3a8ed8"/><path d="M9.2 7.3 C9.1 9.2 7.6 10.6 5.3 11.2 L5.1 10.5 C6.3 10 7.1 9.3 7.3 8.6 Z" fill="#3a8ed8"/></svg>
<div class="t" style="left:147.7px;top:617.84px;font-size:12px;line-height:12px;color:#333;font-weight:400;">EmailAddress.csv</div>
<div style="position:absolute;left:111px;top:642.0px;width:11px;height:11px;background:#f2f2f2"></div>
<div style="position:absolute;left:113px;top:646.9px;width:7px;height:1.2px;background:#666"></div>
<div style="position:absolute;left:115.9px;top:644.0px;width:1.2px;height:7px;background:#666"></div>
<div style="position:absolute;left:122px;top:647px;width:4px;height:1px;background:repeating-linear-gradient(to right,#666 0 1px,transparent 1px 2px)"></div>
<svg style="position:absolute;left:128px;top:639.0px" width="14" height="16" viewBox="0 0 14 16"><path d="M0.7 0.7 H10.2 L13.3 3.8 V15.3 H0.7 Z" fill="#fff" stroke="#55ace8" stroke-width="1.3" stroke-linejoin="round"/><path d="M10 0.8 L13.2 4 H10 Z" fill="#3a8ed8"/><circle cx="7.2" cy="6.9" r="2.1" fill="#3a8ed8"/><path d="M9.2 7.3 C9.1 9.2 7.6 10.6 5.3 11.2 L5.1 10.5 C6.3 10 7.1 9.3 7.3 8.6 Z" fill="#3a8ed8"/></svg>
<div class="t" style="left:147.7px;top:641.84px;font-size:12px;line-height:12px;color:#333;font-weight:400;transform-origin:0 0;transform:scaleX(0.9596)">Password.csv</div>
<div style="position:absolute;left:111px;top:666.0px;width:11px;height:11px;background:#f2f2f2"></div>
<div style="position:absolute;left:113px;top:670.9px;width:7px;height:1.2px;background:#666"></div>
<div style="position:absolute;left:115.9px;top:668.0px;width:1.2px;height:7px;background:#666"></div>
<div style="position:absolute;left:122px;top:671px;width:4px;height:1px;background:repeating-linear-gradient(to right,#666 0 1px,transparent 1px 2px)"></div>
<svg style="position:absolute;left:128px;top:663.0px" width="14" height="16" viewBox="0 0 14 16"><path d="M0.7 0.7 H10.2 L13.3 3.8 V15.3 H0.7 Z" fill="#fff" stroke="#55ace8" stroke-width="1.3" stroke-linejoin="round"/><path d="M10 0.8 L13.2 4 H10 Z" fill="#3a8ed8"/><circle cx="7.2" cy="6.9" r="2.1" fill="#3a8ed8"/><path d="M9.2 7.3 C9.1 9.2 7.6 10.6 5.3 11.2 L5.1 10.5 C6.3 10 7.1 9.3 7.3 8.6 Z" fill="#3a8ed8"/></svg>
<div class="t" style="left:147.7px;top:665.84px;font-size:12px;line-height:12px;color:#333;font-weight:400;transform-origin:0 0;transform:scaleX(0.9646)">Person.csv</div>
<div style="position:absolute;left:111px;top:690.0px;width:11px;height:11px;background:#f2f2f2"></div>
<div style="position:absolute;left:113px;top:694.9px;width:7px;height:1.2px;background:#666"></div>
<div style="position:absolute;left:115.9px;top:692.0px;width:1.2px;height:7px;background:#666"></div>
<div style="position:absolute;left:122px;top:695px;width:4px;height:1px;background:repeating-linear-gradient(to right,#666 0 1px,transparent 1px 2px)"></div>
<svg style="position:absolute;left:128px;top:687.0px" width="14" height="16" viewBox="0 0 14 16"><path d="M0.7 0.7 H10.2 L13.3 3.8 V15.3 H0.7 Z" fill="#fff" stroke="#55ace8" stroke-width="1.3" stroke-linejoin="round"/><path d="M10 0.8 L13.2 4 H10 Z" fill="#3a8ed8"/><circle cx="7.2" cy="6.9" r="2.1" fill="#3a8ed8"/><path d="M9.2 7.3 C9.1 9.2 7.6 10.6 5.3 11.2 L5.1 10.5 C6.3 10 7.1 9.3 7.3 8.6 Z" fill="#3a8ed8"/></svg>
<div class="t" style="left:147.7px;top:689.84px;font-size:12px;line-height:12px;color:#333;font-weight:400;transform-origin:0 0;transform:scaleX(0.9767)">PersonPhone.csv</div>
<div style="position:absolute;left:111px;top:714.0px;width:11px;height:11px;background:#f2f2f2"></div>
<div style="position:absolute;left:113px;top:718.9px;width:7px;height:1.2px;background:#666"></div>
<div style="position:absolute;left:115.9px;top:716.0px;width:1.2px;height:7px;background:#666"></div>
<div style="position:absolute;left:122px;top:719px;width:4px;height:1px;background:repeating-linear-gradient(to right,#666 0 1px,transparent 1px 2px)"></div>
<svg style="position:absolute;left:128px;top:711.0px" width="14" height="16" viewBox="0 0 14 16"><path d="M0.7 0.7 H10.2 L13.3 3.8 V15.3 H0.7 Z" fill="#fff" stroke="#55ace8" stroke-width="1.3" stroke-linejoin="round"/><path d="M10 0.8 L13.2 4 H10 Z" fill="#3a8ed8"/><circle cx="7.2" cy="6.9" r="2.1" fill="#3a8ed8"/><path d="M9.2 7.3 C9.1 9.2 7.6 10.6 5.3 11.2 L5.1 10.5 C6.3 10 7.1 9.3 7.3 8.6 Z" fill="#3a8ed8"/></svg>
<div class="t" style="left:147.7px;top:713.84px;font-size:12px;line-height:12px;color:#333;font-weight:400;">PhoneNumberType.csv</div>
<div style="position:absolute;left:111px;top:738.0px;width:11px;height:11px;background:#f2f2f2"></div>
<div style="position:absolute;left:113px;top:742.9px;width:7px;height:1.2px;background:#666"></div>
<div style="position:absolute;left:115.9px;top:740.0px;width:1.2px;height:7px;background:#666"></div>
<div style="position:absolute;left:122px;top:743px;width:4px;height:1px;background:repeating-linear-gradient(to right,#666 0 1px,transparent 1px 2px)"></div>
<svg style="position:absolute;left:128px;top:735.0px" width="14" height="16" viewBox="0 0 14 16"><path d="M0.7 0.7 H10.2 L13.3 3.8 V15.3 H0.7 Z" fill="#fff" stroke="#55ace8" stroke-width="1.3" stroke-linejoin="round"/><path d="M10 0.8 L13.2 4 H10 Z" fill="#3a8ed8"/><circle cx="7.2" cy="6.9" r="2.1" fill="#3a8ed8"/><path d="M9.2 7.3 C9.1 9.2 7.6 10.6 5.3 11.2 L5.1 10.5 C6.3 10 7.1 9.3 7.3 8.6 Z" fill="#3a8ed8"/></svg>
<div class="t" style="left:147.7px;top:737.84px;font-size:12px;line-height:12px;color:#333;font-weight:400;">StateProvince.csv</div>
<div style="position:absolute;left:316px;top:155px;width:15px;height:597px;background:#fcfcfc"></div>
<svg style="position:absolute;left:319px;top:160px" width="9" height="7" viewBox="0 0 9 7"><path d="M4.5 0.5 L8.5 6.5 H0.5Z" fill="#8a8a8a" stroke="#8a8a8a" stroke-width="1" stroke-linejoin="round"/></svg>
<div style="position:absolute;left:319px;top:173px;width:9px;height:423px;background:#8a8a8a;border-radius:4.5px"></div>
<svg style="position:absolute;left:319px;top:741px" width="9" height="7" viewBox="0 0 9 7"><path d="M4.5 6.5 L8.5 0.5 H0.5Z" fill="#8a8a8a" stroke="#8a8a8a" stroke-width="1" stroke-linejoin="round"/></svg>
<div style="position:absolute;left:331px;top:84px;width:4px;height:668px;background:#dadada"></div>
<div style="position:absolute;left:331px;top:394px;width:4px;height:48px;background:#999"></div>
<svg style="position:absolute;left:331px;top:413px" width="4" height="10" viewBox="0 0 4 10"><path d="M0 5 L4 0.5 V9.5Z" fill="#444"/></svg>
<div style="position:absolute;left:335px;top:84px;width:890px;height:35px;background:#f4f4f4"></div>
<div style="position:absolute;left:335px;top:119px;width:890px;height:1px;background:#dedede"></div>
<svg style="position:absolute;left:347px;top:97.7px" width="14.2" height="8.4" viewBox="0 0 14.2 8.4"><path d="M0.8 4.2 Q7.1 -2.6 13.4 4.2 Q7.1 11 0.8 4.2 Z" fill="none" stroke="#3a89c9" stroke-width="1.5" stroke-linejoin="round"/><circle cx="7" cy="4.1" r="2.3" fill="#3a89c9"/><circle cx="6.3" cy="3.4" r="0.75" fill="#f4f4f4"/></svg>
<svg style="position:absolute;left:378px;top:94.2px" width="14" height="15" viewBox="0 0 14 15"><circle cx="6" cy="6" r="5" fill="none" stroke="#3a89c9" stroke-width="1.9"/><path d="M9.4 9.6 L12.6 13.6" stroke="#3a89c9" stroke-width="2.1" stroke-linecap="round"/><rect x="3.3" y="5.1" width="5.4" height="1.8" fill="#3a89c9"/></svg>
<div id="pct" style="position:absolute;white-space:nowrap;font-family:'Liberation Sans';left:402.40px;top:96.48px;font-size:11.337px;line-height:11.337px;color:#555;font-weight:400;transform-origin:0 0;transform:scaleX(0.9963)">99%</div>
<svg style="position:absolute;left:439.3px;top:94.2px" width="14" height="15" viewBox="0 0 14 15"><circle cx="6" cy="6" r="5" fill="none" stroke="#3a89c9" stroke-width="1.9"/><path d="M9.4 9.6 L12.6 13.6" stroke="#3a89c9" stroke-width="2.1" stroke-linecap="round"/><rect x="3.3" y="5.1" width="5.4" height="1.8" fill="#3a89c9"/><rect x="5.1" y="3.3" width="1.8" height="5.4" fill="#3a89c9"/></svg>
<svg style="position:absolute;left:467px;top:94px" width="16" height="16" viewBox="0 0 16 16"><path d="M0.7 4.2 V0.7 H4.2 M11.8 0.7 H15.3 V4.2 M15.3 11.8 V15.3 H11.8 M4.2 15.3 H0.7 V11.8" fill="none" stroke="#3a89c9" stroke-width="1.4"/><path d="M4.6 4.6 L11.4 11.4 M11.4 4.6 L4.6 11.4" stroke="#3a89c9" stroke-width="1.9"/><path d="M3.4 3.4 H7.6 L3.4 7.6Z M12.6 3.4 H8.4 L12.6 7.6Z M12.6 12.6 H8.4 L12.6 8.4Z M3.4 12.6 H7.6 L3.4 8.4Z" fill="#3a89c9"/></svg>
<svg style="position:absolute;left:497.3px;top:94.5px" width="15.3" height="15.3" viewBox="0 0 15.3 15.3"><path d="M7.65 3 V12.3 M3 7.65 H12.3" stroke="#3a89c9" stroke-width="1.8"/><path d="M7.65 0 L10.4 3.9 H4.9Z M7.65 15.3 L10.4 11.4 H4.9Z M0 7.65 L3.9 4.9 V10.4Z M15.3 7.65 L11.4 4.9 V10.4Z" fill="#3a89c9"/></svg>
<div style="position:absolute;left:516px;top:91px;width:22px;height:21.5px;background:#dedede;border-radius:2px"></div>
<svg style="position:absolute;left:520px;top:95px" width="13" height="13" viewBox="0 0 13 13"><path d="M0.65 3.6 V0.65 H3.6 M9.4 0.65 H12.35 V3.6 M12.35 9.4 V12.35 H9.4 M3.6 12.35 H0.65 V9.4 M5 0.65 H8 M12.35 5 V8 M5 12.35 H8 M0.65 5 V8" fill="none" stroke="#3a89c9" stroke-width="1.3"/></svg>
<div style="position:absolute;left:546px;top:95px;width:1px;height:14px;background:#d8d8d8"></div>
<svg style="position:absolute;left:559px;top:98px" width="14" height="8" viewBox="0 0 14 8"><path d="M3.2 4.6 Q7.8 -1.4 13.1 6.2" fill="none" stroke="#3a89c9" stroke-width="2"/><path d="M0.1 0.9 V6.8 H5.9 Z" fill="#3a89c9"/></svg>
<svg style="position:absolute;left:588.8px;top:98px" width="14" height="8" viewBox="0 0 14 8"><path d="M10.8 4.6 Q6.2 -1.4 0.9 6.2" fill="none" stroke="#a9cbe8" stroke-width="2"/><path d="M13.9 0.9 V6.8 H8.1 Z" fill="#a9cbe8"/></svg>
<div style="position:absolute;left:615px;top:95px;width:1px;height:14px;background:#d8d8d8"></div>
<svg style="position:absolute;left:628.7px;top:95.9px" width="12.5" height="12.3" viewBox="0 0 12.5 12.3"><path d="M4.3 0 H8.2 V4.2 H12.5 V8.1 H8.2 V12.3 H4.3 V8.1 H0 V4.2 H4.3Z" fill="#3a89c9"/></svg>
<svg style="position:absolute;left:650.6px;top:100px" width="9" height="5" viewBox="0 0 9 5"><path d="M0.5 0.5 L4.5 4.5 L8.5 0.5" fill="none" stroke="#b8b8b8" stroke-width="1.15"/></svg>
<svg style="position:absolute;left:677.8px;top:95px" width="16" height="13.5" viewBox="0 0 16 13.5"><path d="M5 2.6 H8 V10.6 H5 M8 6.6 H10.4" fill="none" stroke="#a0a0a0" stroke-width="1.1"/><rect x="0.7" y="0.7" width="4.2" height="4.2" fill="#cfe3f5" stroke="#3a89c9" stroke-width="1.3"/><rect x="0.7" y="8.7" width="4.2" height="4.2" fill="#cfe3f5" stroke="#3a89c9" stroke-width="1.3"/><rect x="10.6" y="4.6" width="4.2" height="4.2" fill="#cfe3f5" stroke="#3a89c9" stroke-width="1.3"/></svg>
<svg style="position:absolute;left:701.6px;top:100px" width="9" height="5" viewBox="0 0 9 5"><path d="M0.5 0.5 L4.5 4.5 L8.5 0.5" fill="none" stroke="#b8b8b8" stroke-width="1.15"/></svg>
<svg style="position:absolute;left:729px;top:94px" width="16" height="16" viewBox="0 0 16 16"><rect x="0.5" y="3" width="15" height="12.5" fill="#fff" stroke="#b8b8b8" stroke-width="1"/><path d="M5.5 4.5 V15.5 M10.5 4.5 V15.5" stroke="#b8b8b8" stroke-width="1"/><rect x="0.75" y="0.75" width="14.5" height="4" rx="1" fill="#b9dbf3" stroke="#3a89c9" stroke-width="1.5"/></svg>
<svg style="position:absolute;left:752.6px;top:100px" width="9" height="5" viewBox="0 0 9 5"><path d="M0.5 0.5 L4.5 4.5 L8.5 0.5" fill="none" stroke="#b8b8b8" stroke-width="1.15"/></svg>
<svg style="position:absolute;left:780px;top:94px" width="16" height="14" viewBox="0 0 16 14"><path d="M3.2 10.85 H8 V3 H12.6" fill="none" stroke="#3a89c9" stroke-width="2"/><path d="M15.8 2.9 L12.3 -0.1 V5.9Z M0.2 10.8 L3.7 7.9 V13.8Z" fill="#3a89c9"/></svg>
<svg style="position:absolute;left:803.4px;top:100px" width="9" height="5" viewBox="0 0 9 5"><path d="M0.5 0.5 L4.5 4.5 L8.5 0.5" fill="none" stroke="#b8b8b8" stroke-width="1.15"/></svg>
<div id="dprops" style="position:absolute;white-space:nowrap;font-family:'Liberation Sans';left:835.58px;top:96.34px;font-size:11.773px;line-height:11.773px;color:#555;font-weight:400;transform-origin:0 0;transform:scaleX(0.9856)">Diagram Properties</div>
<svg style="position:absolute;left:961.7px;top:94.7px" width="5" height="15" viewBox="0 0 5 15"><circle cx="2.2" cy="2.2" r="2.1" fill="#3a89c9"/><circle cx="2.2" cy="7.2" r="2.1" fill="#3a89c9"/><circle cx="2.2" cy="12.3" r="2.1" fill="#3a89c9"/></svg>
<div style="position:absolute;left:969.3px;top:94.3px;width:10.4px;height:10.4px;background:#dedede;border-radius:3px"></div>
<div class="t" style="left:971.6px;top:95.18px;font-size:9px;line-height:9px;color:#333;font-weight:400;">1</div>
<div style="position:absolute;left:1067px;top:88.3px;width:120px;height:26.5px;background:#e9e9e9;border-radius:4px"></div>
<svg style="position:absolute;left:1076.5px;top:95px" width="13" height="15" viewBox="0 0 13 15"><circle cx="7.0" cy="5.8" r="4.9" fill="none" stroke="#3a89c9" stroke-width="1.6"/><path d="M3.6 9.6 L1.2 13.6" stroke="#3a89c9" stroke-width="2" stroke-linecap="round"/></svg>
<div id="qfind" style="position:absolute;white-space:nowrap;font-family:'Liberation Sans';left:1098.67px;top:96.06px;font-size:12.645px;line-height:12.645px;color:#c2c2c2;font-weight:400;transform-origin:0 0;transform:scaleX(1.0215)">Quick find</div>
<svg style="position:absolute;left:1199.1px;top:94px" width="14" height="14" viewBox="0 0 14 14"><rect x="3" y="0" width="8" height="2.9" fill="#86b4dc"/><path d="M0 5.6 Q0 3.9 1.7 3.9 H12.3 Q14 3.9 14 5.6 V11.6 L13 11.9 V8 H1 V11.9 L0 11.6 Z" fill="#3a89c9"/><rect x="1.8" y="8" width="10.4" height="5.8" fill="#fff"/><rect x="3" y="8.9" width="8" height="4.9" fill="#3a89c9"/><rect x="4" y="9.9" width="6" height="0.9" fill="#fff"/><rect x="4" y="12" width="6" height="0.9" fill="#fff"/></svg>
<div style="position:absolute;left:335px;top:120px;width:890px;height:632px;background:#fff"></div>
<div style="position:absolute;left:1225px;top:84px;width:4px;height:668px;background:#dadada"></div>
<div style="position:absolute;left:1225px;top:394px;width:4px;height:48px;background:#999"></div>
<svg style="position:absolute;left:1225px;top:413px" width="4" height="10" viewBox="0 0 4 10"><path d="M0 5 L4 0.5 V9.5Z" fill="#444"/></svg>
<div style="position:absolute;left:1229px;top:84px;width:36px;height:668px;background:#f4f4f4"></div>
<svg style="position:absolute;left:1243.5px;top:95px" width="10" height="14" viewBox="0 0 10 14"><path d="M8.3 1 L2 7 L8.3 13" fill="none" stroke="#3a89c9" stroke-width="1.7"/></svg>
<div class="t" style="left:1240px;top:115.7px;font-size:14px;line-height:14px;color:#3a8ed3;font-weight:700;transform-origin:0 0;transform:translate(14.7px,0) rotate(90deg)">Details</div>
<svg style="position:absolute;left:0px;top:0px" width="1267" height="753" viewBox="0 0 1267 753"><path d="M790.95 304.6 V433" stroke="#8e8e8e" stroke-width="1.4"/></svg>
<svg style="position:absolute;left:785px;top:430px" width="12" height="10" viewBox="0 0 12 10"><path d="M5.95 0.8 L10.6 8.8 Q5.95 7.2 1.3 8.8 Z" fill="#5e5e5e" stroke="#5e5e5e" stroke-width="0.8" stroke-linejoin="round"/></svg>
<div class="t" style="left:501px;top:360.04px;font-size:11.879999999999999px;line-height:11.879999999999999px;color:#111;font-weight:400;">Department.csv to EmployeeDepartmentHistory.csv</div>
<svg style="position:absolute;left:0;top:0" width="1267" height="753"><rect x="689.25" y="160.0" width="203.35" height="144.60" rx="3.6" fill="#fff" stroke="#3c3c3c" stroke-width="1.3"/><path d="M689.9 183.3 H891.95 M689.9 206.4 H891.95" stroke="#3a3a3a" stroke-width="1.2"/></svg>
<svg style="position:absolute;left:695.25px;top:164.0px" width="14" height="16" viewBox="0 0 14 16"><path d="M0.7 0.7 H10.2 L13.3 3.8 V15.3 H0.7 Z" fill="#fff" stroke="#55ace8" stroke-width="1.3" stroke-linejoin="round"/><path d="M10 0.8 L13.2 4 H10 Z" fill="#3a8ed8"/><circle cx="7.2" cy="6.9" r="2.1" fill="#3a8ed8"/><path d="M9.2 7.3 C9.1 9.2 7.6 10.6 5.3 11.2 L5.1 10.5 C6.3 10 7.1 9.3 7.3 8.6 Z" fill="#3a8ed8"/></svg>
<div class="t" style="left:714.85px;top:166.74px;font-size:11.879999999999999px;line-height:11.879999999999999px;color:#111;font-weight:400;">EmployeeDepartmentHistory.csv</div>
<div class="t" style="left:699.5px;top:214.74px;font-size:11.879999999999999px;line-height:11.879999999999999px;color:#111;font-weight:400;">BusinessEntityID</div>
<div class="t" style="left:797.2px;top:216.00px;font-size:10.4px;line-height:10.4px;font-weight:700;color:#111;transform-origin:0 0;transform:scaleX(0.94)">12</div>
<div class="t" style="left:699.5px;top:229.59px;font-size:11.879999999999999px;line-height:11.879999999999999px;color:#111;font-weight:400;">DepartmentID</div>
<div class="t" style="left:797.2px;top:230.85px;font-size:10.4px;line-height:10.4px;font-weight:700;color:#111;transform-origin:0 0;transform:scaleX(0.94)">12</div>
<div class="t" style="left:699.5px;top:244.44px;font-size:11.879999999999999px;line-height:11.879999999999999px;color:#111;font-weight:400;">EndDate</div>
<div class="t" style="left:797.2px;top:245.70px;font-size:10.4px;line-height:10.4px;font-weight:700;color:#111;transform-origin:0 0;transform:scaleX(0.74)">AB</div>
<div class="t" style="left:699.5px;top:259.29px;font-size:11.879999999999999px;line-height:11.879999999999999px;color:#111;font-weight:400;">ModifiedDate</div>
<svg style="position:absolute;left:798.0px;top:259.75px" width="9.4" height="9.4" viewBox="0 0 9.4 9.4"><circle cx="4.7" cy="4.7" r="4" fill="none" stroke="#111" stroke-width="1.3"/><path d="M4.7 2.2 V4.9 H7" fill="none" stroke="#111" stroke-width="1.2"/></svg>
<div class="t" style="left:699.5px;top:274.14px;font-size:11.879999999999999px;line-height:11.879999999999999px;color:#111;font-weight:400;">ShiftID</div>
<div class="t" style="left:797.2px;top:275.40px;font-size:10.4px;line-height:10.4px;font-weight:700;color:#111;transform-origin:0 0;transform:scaleX(0.94)">12</div>
<div class="t" style="left:699.5px;top:288.99px;font-size:11.879999999999999px;line-height:11.879999999999999px;color:#111;font-weight:400;">StartDate</div>
<svg style="position:absolute;left:798.0px;top:289.45px" width="9.4" height="9.4" viewBox="0 0 9.4 9.4"><circle cx="4.7" cy="4.7" r="4" fill="none" stroke="#111" stroke-width="1.3"/><path d="M4.7 2.2 V4.9 H7" fill="none" stroke="#111" stroke-width="1.2"/></svg>
<svg style="position:absolute;left:0;top:0" width="1267" height="753"><rect x="920.44" y="177.4" width="138.76" height="308.60" rx="3.6" fill="#fff" stroke="#3c3c3c" stroke-width="1.3"/><path d="M921.09 201.14 H1058.55 M921.09 223.74 H1058.55" stroke="#3a3a3a" stroke-width="1.2"/></svg>
<svg style="position:absolute;left:926.44px;top:181.4px" width="14" height="16" viewBox="0 0 14 16"><path d="M0.7 0.7 H10.2 L13.3 3.8 V15.3 H0.7 Z" fill="#fff" stroke="#55ace8" stroke-width="1.3" stroke-linejoin="round"/><path d="M10 0.8 L13.2 4 H10 Z" fill="#3a8ed8"/><circle cx="7.2" cy="6.9" r="2.1" fill="#3a8ed8"/><path d="M9.2 7.3 C9.1 9.2 7.6 10.6 5.3 11.2 L5.1 10.5 C6.3 10 7.1 9.3 7.3 8.6 Z" fill="#3a8ed8"/></svg>
<div class="t" style="left:946.0400000000001px;top:184.14px;font-size:11.879999999999999px;line-height:11.879999999999999px;color:#111;font-weight:400;">Employee.csv</div>
<div class="t" style="left:930.5px;top:231.64px;font-size:11.879999999999999px;line-height:11.879999999999999px;color:#111;font-weight:400;">BirthDate</div>
<svg style="position:absolute;left:1037.1px;top:232.1px" width="9.4" height="9.4" viewBox="0 0 9.4 9.4"><circle cx="4.7" cy="4.7" r="4" fill="none" stroke="#111" stroke-width="1.3"/><path d="M4.7 2.2 V4.9 H7" fill="none" stroke="#111" stroke-width="1.2"/></svg>
<div class="t" style="left:930.5px;top:246.49px;font-size:11.879999999999999px;line-height:11.879999999999999px;color:#111;font-weight:400;">BusinessEntityID</div>
<div class="t" style="left:1036.3px;top:247.75px;font-size:10.4px;line-height:10.4px;font-weight:700;color:#111;transform-origin:0 0;transform:scaleX(0.94)">12</div>
<div class="t" style="left:930.5px;top:261.34px;font-size:11.879999999999999px;line-height:11.879999999999999px;color:#111;font-weight:400;">CurrentFlag</div>
<div class="t" style="left:1036.3px;top:262.60px;font-size:10.4px;line-height:10.4px;font-weight:700;color:#111;transform-origin:0 0;transform:scaleX(0.94)">12</div>
<div class="t" style="left:930.5px;top:276.19px;font-size:11.879999999999999px;line-height:11.879999999999999px;color:#111;font-weight:400;">Gender</div>
<div class="t" style="left:1036.3px;top:277.45px;font-size:10.4px;line-height:10.4px;font-weight:700;color:#111;transform-origin:0 0;transform:scaleX(0.74)">AB</div>
<div class="t" style="left:930.5px;top:291.04px;font-size:11.879999999999999px;line-height:11.879999999999999px;color:#111;font-weight:400;">HireDate</div>
<svg style="position:absolute;left:1037.1px;top:291.49999999999994px" width="9.4" height="9.4" viewBox="0 0 9.4 9.4"><circle cx="4.7" cy="4.7" r="4" fill="none" stroke="#111" stroke-width="1.3"/><path d="M4.7 2.2 V4.9 H7" fill="none" stroke="#111" stroke-width="1.2"/></svg>
<div class="t" style="left:930.5px;top:305.89px;font-size:11.879999999999999px;line-height:11.879999999999999px;color:#111;font-weight:400;">JobTitle</div>
<div class="t" style="left:1036.3px;top:307.15px;font-size:10.4px;line-height:10.4px;font-weight:700;color:#111;transform-origin:0 0;transform:scaleX(0.74)">AB</div>
<div class="t" style="left:930.5px;top:320.74px;font-size:11.879999999999999px;line-height:11.879999999999999px;color:#111;font-weight:400;">LoginID</div>
<div class="t" style="left:1036.3px;top:322.00px;font-size:10.4px;line-height:10.4px;font-weight:700;color:#111;transform-origin:0 0;transform:scaleX(0.74)">AB</div>
<div class="t" style="left:930.5px;top:335.59px;font-size:11.879999999999999px;line-height:11.879999999999999px;color:#111;font-weight:400;">MaritalStatus</div>
<div class="t" style="left:1036.3px;top:336.85px;font-size:10.4px;line-height:10.4px;font-weight:700;color:#111;transform-origin:0 0;transform:scaleX(0.74)">AB</div>
<div class="t" style="left:930.5px;top:350.44px;font-size:11.879999999999999px;line-height:11.879999999999999px;color:#111;font-weight:400;">ModifiedDate</div>
<div class="t" style="left:1036.3px;top:351.70px;font-size:10.4px;line-height:10.4px;font-weight:700;color:#111;transform-origin:0 0;transform:scaleX(0.74)">AB</div>
<div class="t" style="left:930.5px;top:365.29px;font-size:11.879999999999999px;line-height:11.879999999999999px;color:#111;font-weight:400;">NationalIDNumber</div>
<div class="t" style="left:1036.3px;top:366.55px;font-size:10.4px;line-height:10.4px;font-weight:700;color:#111;transform-origin:0 0;transform:scaleX(0.94)">12</div>
<div class="t" style="left:930.5px;top:380.14px;font-size:11.879999999999999px;line-height:11.879999999999999px;color:#111;font-weight:400;">OrganizationLevel</div>
<div class="t" style="left:1036.3px;top:381.40px;font-size:10.4px;line-height:10.4px;font-weight:700;color:#111;transform-origin:0 0;transform:scaleX(0.94)">12</div>
<div class="t" style="left:930.5px;top:394.99px;font-size:11.879999999999999px;line-height:11.879999999999999px;color:#111;font-weight:400;">OrganizationNode</div>
<div class="t" style="left:1036.3px;top:396.25px;font-size:10.4px;line-height:10.4px;font-weight:700;color:#111;transform-origin:0 0;transform:scaleX(0.74)">AB</div>
<div class="t" style="left:930.5px;top:409.84px;font-size:11.879999999999999px;line-height:11.879999999999999px;color:#111;font-weight:400;">SSN</div>
<div class="t" style="left:1036.3px;top:411.10px;font-size:10.4px;line-height:10.4px;font-weight:700;color:#111;transform-origin:0 0;transform:scaleX(0.74)">AB</div>
<div class="t" style="left:930.5px;top:424.69px;font-size:11.879999999999999px;line-height:11.879999999999999px;color:#111;font-weight:400;">SalariedFlag</div>
<div class="t" style="left:1036.3px;top:425.95px;font-size:10.4px;line-height:10.4px;font-weight:700;color:#111;transform-origin:0 0;transform:scaleX(0.94)">12</div>
<div class="t" style="left:930.5px;top:439.54px;font-size:11.879999999999999px;line-height:11.879999999999999px;color:#111;font-weight:400;">SickLeaveHours</div>
<div class="t" style="left:1036.3px;top:440.80px;font-size:10.4px;line-height:10.4px;font-weight:700;color:#111;transform-origin:0 0;transform:scaleX(0.94)">12</div>
<div class="t" style="left:930.5px;top:454.39px;font-size:11.879999999999999px;line-height:11.879999999999999px;color:#111;font-weight:400;">VacationHours</div>
<div class="t" style="left:1036.3px;top:455.65px;font-size:10.4px;line-height:10.4px;font-weight:700;color:#111;transform-origin:0 0;transform:scaleX(0.94)">12</div>
<div class="t" style="left:930.5px;top:469.24px;font-size:11.879999999999999px;line-height:11.879999999999999px;color:#111;font-weight:400;">rowguid</div>
<div class="t" style="left:1036.3px;top:470.50px;font-size:10.4px;line-height:10.4px;font-weight:700;color:#111;transform-origin:0 0;transform:scaleX(0.74)">AB</div>
<svg style="position:absolute;left:0;top:0" width="1267" height="753"><rect x="400.2" y="461.0" width="131.00" height="100.15" rx="3.6" fill="#fff" stroke="#3c3c3c" stroke-width="1.3"/><path d="M400.84999999999997 484.6 H530.5500000000001 M400.84999999999997 507.5 H530.5500000000001" stroke="#3a3a3a" stroke-width="1.2"/></svg>
<svg style="position:absolute;left:406.2px;top:465.0px" width="14" height="16" viewBox="0 0 14 16"><path d="M0.7 0.7 H10.2 L13.3 3.8 V15.3 H0.7 Z" fill="#fff" stroke="#55ace8" stroke-width="1.3" stroke-linejoin="round"/><path d="M10 0.8 L13.2 4 H10 Z" fill="#3a8ed8"/><circle cx="7.2" cy="6.9" r="2.1" fill="#3a8ed8"/><path d="M9.2 7.3 C9.1 9.2 7.6 10.6 5.3 11.2 L5.1 10.5 C6.3 10 7.1 9.3 7.3 8.6 Z" fill="#3a8ed8"/></svg>
<div class="t" style="left:425.8px;top:467.74px;font-size:11.879999999999999px;line-height:11.879999999999999px;color:#111;font-weight:400;">BusinessEntity.csv</div>
<div class="t" style="left:410.6px;top:515.94px;font-size:11.879999999999999px;line-height:11.879999999999999px;color:#111;font-weight:400;">BusinessEntityID</div>
<div class="t" style="left:507.9px;top:517.20px;font-size:10.4px;line-height:10.4px;font-weight:700;color:#111;transform-origin:0 0;transform:scaleX(0.94)">12</div>
<div class="t" style="left:410.6px;top:530.79px;font-size:11.879999999999999px;line-height:11.879999999999999px;color:#111;font-weight:400;">ModifiedDate</div>
<svg style="position:absolute;left:508.7px;top:531.25px" width="9.4" height="9.4" viewBox="0 0 9.4 9.4"><circle cx="4.7" cy="4.7" r="4" fill="none" stroke="#111" stroke-width="1.3"/><path d="M4.7 2.2 V4.9 H7" fill="none" stroke="#111" stroke-width="1.2"/></svg>
<div class="t" style="left:410.6px;top:545.64px;font-size:11.879999999999999px;line-height:11.879999999999999px;color:#111;font-weight:400;">rowguid</div>
<div class="t" style="left:507.9px;top:546.90px;font-size:10.4px;line-height:10.4px;font-weight:700;color:#111;transform-origin:0 0;transform:scaleX(0.74)">AB</div>
<svg style="position:absolute;left:0;top:0" width="1267" height="753"><rect x="501.8" y="621.8" width="131.20" height="115.00" rx="3.6" fill="#fff" stroke="#3c3c3c" stroke-width="1.3"/><path d="M502.45 645.4 H632.35 M502.45 668.7 H632.35" stroke="#3a3a3a" stroke-width="1.2"/></svg>
<svg style="position:absolute;left:507.8px;top:625.8px" width="14" height="16" viewBox="0 0 14 16"><path d="M0.7 0.7 H10.2 L13.3 3.8 V15.3 H0.7 Z" fill="#fff" stroke="#55ace8" stroke-width="1.3" stroke-linejoin="round"/><path d="M10 0.8 L13.2 4 H10 Z" fill="#3a8ed8"/><circle cx="7.2" cy="6.9" r="2.1" fill="#3a8ed8"/><path d="M9.2 7.3 C9.1 9.2 7.6 10.6 5.3 11.2 L5.1 10.5 C6.3 10 7.1 9.3 7.3 8.6 Z" fill="#3a8ed8"/></svg>
<div class="t" style="left:527.4px;top:628.54px;font-size:11.879999999999999px;line-height:11.879999999999999px;color:#111;font-weight:400;">JobCandidate.csv</div>
<div class="t" style="left:512.3px;top:677.44px;font-size:11.879999999999999px;line-height:11.879999999999999px;color:#111;font-weight:400;">BusinessEntityID</div>
<div class="t" style="left:609.8px;top:678.70px;font-size:10.4px;line-height:10.4px;font-weight:700;color:#111;transform-origin:0 0;transform:scaleX(0.74)">AB</div>
<div class="t" style="left:512.3px;top:692.29px;font-size:11.879999999999999px;line-height:11.879999999999999px;color:#111;font-weight:400;">JobCandidateID</div>
<div class="t" style="left:609.8px;top:693.55px;font-size:10.4px;line-height:10.4px;font-weight:700;color:#111;transform-origin:0 0;transform:scaleX(0.94)">12</div>
<div class="t" style="left:512.3px;top:707.14px;font-size:11.879999999999999px;line-height:11.879999999999999px;color:#111;font-weight:400;">ModifiedDate</div>
<svg style="position:absolute;left:610.5999999999999px;top:707.6px" width="9.4" height="9.4" viewBox="0 0 9.4 9.4"><circle cx="4.7" cy="4.7" r="4" fill="none" stroke="#111" stroke-width="1.3"/><path d="M4.7 2.2 V4.9 H7" fill="none" stroke="#111" stroke-width="1.2"/></svg>
<div class="t" style="left:512.3px;top:721.99px;font-size:11.879999999999999px;line-height:11.879999999999999px;color:#111;font-weight:400;">Resume</div>
<div class="t" style="left:609.8px;top:723.25px;font-size:10.4px;line-height:10.4px;font-weight:700;color:#111;transform-origin:0 0;transform:scaleX(0.74)">AB</div>
<svg style="position:absolute;left:0;top:0" width="1267" height="753"><rect x="733.4" y="447.8" width="115.20" height="115.50" rx="4.5" fill="#f5f9fd" stroke="#3262cd" stroke-width="2.9"/><path d="M734.85 471.6 H847.15 M734.85 494.4 H847.15" stroke="#3a3a3a" stroke-width="1.2"/></svg>
<svg style="position:absolute;left:738.6999999999999px;top:451.8px" width="14" height="16" viewBox="0 0 14 16"><path d="M0.7 0.7 H10.2 L13.3 3.8 V15.3 H0.7 Z" fill="#fff" stroke="#55ace8" stroke-width="1.3" stroke-linejoin="round"/><path d="M10 0.8 L13.2 4 H10 Z" fill="#3a8ed8"/><circle cx="7.2" cy="6.9" r="2.1" fill="#3a8ed8"/><path d="M9.2 7.3 C9.1 9.2 7.6 10.6 5.3 11.2 L5.1 10.5 C6.3 10 7.1 9.3 7.3 8.6 Z" fill="#3a8ed8"/></svg>
<div class="t" style="left:759.0px;top:454.54px;font-size:11.879999999999999px;line-height:11.879999999999999px;color:#111;font-weight:400;">Department.csv</div>
<div class="t" style="left:743.7px;top:502.54px;font-size:11.879999999999999px;line-height:11.879999999999999px;color:#111;font-weight:400;">DepartmentID</div>
<div class="t" style="left:825px;top:503.80px;font-size:10.4px;line-height:10.4px;font-weight:700;color:#111;transform-origin:0 0;transform:scaleX(0.94)">12</div>
<div class="t" style="left:743.7px;top:517.39px;font-size:11.879999999999999px;line-height:11.879999999999999px;color:#111;font-weight:400;">GroupName</div>
<div class="t" style="left:825px;top:518.65px;font-size:10.4px;line-height:10.4px;font-weight:700;color:#111;transform-origin:0 0;transform:scaleX(0.74)">AB</div>
<div class="t" style="left:743.7px;top:532.24px;font-size:11.879999999999999px;line-height:11.879999999999999px;color:#111;font-weight:400;">ModifiedDate</div>
<svg style="position:absolute;left:825.8px;top:532.7px" width="9.4" height="9.4" viewBox="0 0 9.4 9.4"><circle cx="4.7" cy="4.7" r="4" fill="none" stroke="#111" stroke-width="1.3"/><path d="M4.7 2.2 V4.9 H7" fill="none" stroke="#111" stroke-width="1.2"/></svg>
<div class="t" style="left:743.7px;top:547.09px;font-size:11.879999999999999px;line-height:11.879999999999999px;color:#111;font-weight:400;">Name</div>
<div class="t" style="left:825px;top:548.35px;font-size:10.4px;line-height:10.4px;font-weight:700;color:#111;transform-origin:0 0;transform:scaleX(0.74)">AB</div>
<div style="position:absolute;left:726.8px;top:440.8px;width:6.4px;height:6.4px;border-radius:50%;background:#3d67cf;"></div>
<div style="position:absolute;left:726.8px;top:502.2px;width:6.4px;height:6.4px;border-radius:50%;background:#3d67cf;box-shadow:0 0 0 1.3px #fff;"></div>
<div style="position:absolute;left:726.8px;top:563.4px;width:6.4px;height:6.4px;border-radius:50%;background:#3d67cf;"></div>
<div style="position:absolute;left:787.8px;top:440.8px;width:6.4px;height:6.4px;border-radius:50%;background:#3d67cf;box-shadow:0 0 0 1.3px #fff;"></div>
<div style="position:absolute;left:787.8px;top:563.4px;width:6.4px;height:6.4px;border-radius:50%;background:#3d67cf;box-shadow:0 0 0 1.3px #fff;"></div>
<div style="position:absolute;left:848.8px;top:440.8px;width:6.4px;height:6.4px;border-radius:50%;background:#3d67cf;"></div>
<div style="position:absolute;left:848.8px;top:502.2px;width:6.4px;height:6.4px;border-radius:50%;background:#3d67cf;box-shadow:0 0 0 1.3px #fff;"></div>
<div style="position:absolute;left:848.8px;top:563.4px;width:6.4px;height:6.4px;border-radius:50%;background:#3d67cf;"></div>
<div style="position:absolute;left:855.5px;top:448px;width:23.2px;height:23.3px;background:#f3f3f3;border:1px solid #dcdcdc;border-radius:3px;box-sizing:border-box"></div>
<svg style="position:absolute;left:859.5px;top:451.9px" width="16" height="14" viewBox="0 0 16 14"><path d="M3.2 10.85 H8 V3 H12.6" fill="none" stroke="#3a89c9" stroke-width="2"/><path d="M15.8 2.9 L12.3 -0.1 V5.9Z M0.2 10.8 L3.7 7.9 V13.8Z" fill="#3a89c9"/></svg>
<svg style="position:absolute;left:0px;top:0px" width="1267" height="753" viewBox="0 0 1267 753"><path d="M251 492.5 L320 468.5 C335 463.5 349 460.3 358 460.5 C366 460.8 372 462.8 378 465.3 L398.5 474.5" fill="none" stroke="#e6141c" stroke-width="2.7" stroke-linecap="round" stroke-linejoin="round"/></svg>
<div style="position:absolute;left:0px;top:0px;width:1px;height:753px;background:#9a9a9a"></div>
<div style="position:absolute;left:1266px;top:0px;width:1px;height:753px;background:#9a9a9a"></div>
<div style="position:absolute;left:1265px;top:84px;width:1px;height:668px;background:#fff"></div>
<div style="position:absolute;left:0px;top:751px;width:1267px;height:1px;background:#fff"></div>
<div style="position:absolute;left:0px;top:752px;width:1267px;height:1px;background:#223850"></div>
<svg style="position:absolute;left:0px;top:0px" width="1267" height="753" viewBox="0 0 1267 753"><path d="M0 742.8 H1 V744 A8 8 0 0 0 9 752 V753 H0 Z" fill="#1f3752"/><path d="M1267 742.8 H1266 V744 A8 8 0 0 1 1258 752 V753 H1267 Z" fill="#1f3752"/></svg>
</body></html>
